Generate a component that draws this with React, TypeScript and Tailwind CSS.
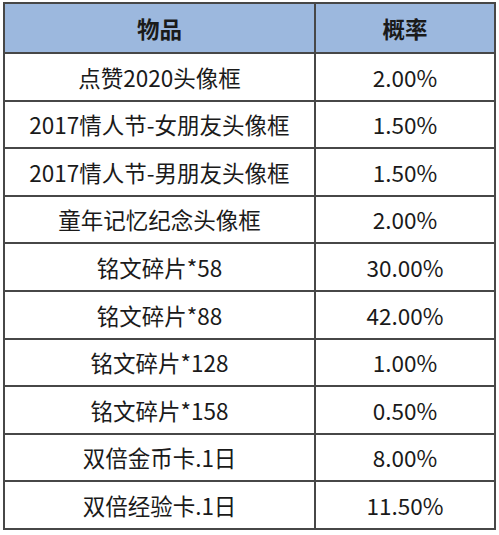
const rows: [string, string][] = [
  ['点赞2020头像框', '2.00%'],
  ['2017情人节-女朋友头像框', '1.50%'],
  ['2017情人节-男朋友头像框', '1.50%'],
  ['童年记忆纪念头像框', '2.00%'],
  ['铭文碎片*58', '30.00%'],
  ['铭文碎片*88', '42.00%'],
  ['铭文碎片*128', '1.00%'],
  ['铭文碎片*158', '0.50%'],
  ['双倍金币卡.1日', '8.00%'],
  ['双倍经验卡.1日', '11.50%'],
];

export default function App() {
  return (
    <div className="w-[499px] h-[535px] bg-white pt-[2px] pl-[3px]">
      <table
        className="w-[493px] border-collapse text-[#1a1a1a] text-[22.5px]"
        style={{ fontFamily: '"Noto Sans CJK SC", "Noto Sans", sans-serif' }}
      >
        <thead>
          <tr className="h-[50px] bg-[#9cb8de]">
            <th className="w-[311px] border-2 border-[#474747] font-bold text-center leading-none">物品</th>
            <th className="border-2 border-[#474747] font-bold text-center leading-none">概率</th>
          </tr>
        </thead>
        <tbody>
          {rows.map(([name, rate]) => (
            <tr key={name} className="h-[47.6px]">
              <td className="border-2 border-[#474747] text-center leading-none">{name}</td>
              <td className="border-2 border-[#474747] text-center leading-none">{rate}</td>
            </tr>
          ))}
        </tbody>
      </table>
    </div>
  );
}
